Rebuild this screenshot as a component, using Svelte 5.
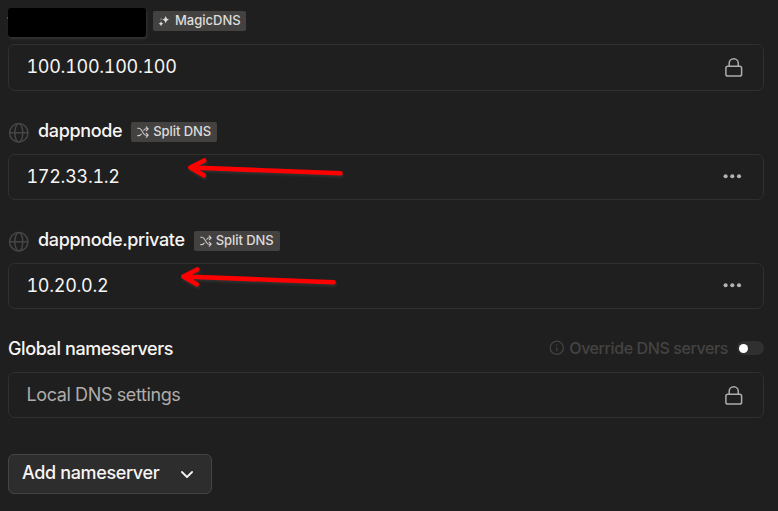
<script>
  const servers = [
    { domain: 'dappnode', address: '172.33.1.2' },
    { domain: 'dappnode.private', address: '10.20.0.2' }
  ];
</script>

{#snippet lock()}
  <svg class="lock" width="20" height="22" viewBox="0 0 20 22" fill="none" stroke="#afacab" stroke-width="1.5">
    <rect x="1.9" y="9.2" width="15.7" height="9.9" rx="1.9" />
    <path d="M5.2 9V6.3a4.55 4.55 0 0 1 9.1 0V9" />
  </svg>
{/snippet}

<main>
  <header class="first">
    <span class="redacted"></span>
    <span class="badge magic">
      <svg width="12" height="12" viewBox="0 0 12 12" fill="#dedcda">
        <path d="M7.7 .7Q8.3 4 11.4 4.6Q8.3 5.2 7.7 8.5Q7.1 5.2 4 4.6Q7.1 4 7.7 .7Z" />
        <path d="M3 6.2Q3.4 8.3 5.4 8.7Q3.4 9.1 3 11.2Q2.6 9.1 .6 8.7Q2.6 8.3 3 6.2Z" />
        <circle cx="3" cy="4" r=".6" />
      </svg>
      <span>MagicDNS</span>
    </span>
  </header>
  <div class="field tall"><span class="ip">100.100.100.100</span>{@render lock()}</div>

  {#each servers as server, i}
    <header class="domain">
      <svg class="globe" width="22" height="22" viewBox="0 0 22 22" fill="none" stroke="#484645" stroke-width="1.5">
        <circle cx="10.8" cy="10.8" r="9.2" />
        <ellipse cx="10.8" cy="10.8" rx="4" ry="9.2" />
        <path d="M1.6 10.8h18.4" />
      </svg>
      <h2>{server.domain}</h2>
      <span class="badge split">
        <svg width="12" height="12" viewBox="0 0 12 12" fill="none" stroke="#cfcdcb" stroke-width="1.05" stroke-linecap="round" stroke-linejoin="round">
          <path d="M.7 2.2h1.2c1.2 0 1.7.7 2.3 1.6l2.5 3.9c.6.9 1.2 1.5 2.3 1.5h2.1M9.2 7.1l2 2.1-2 2.1M.7 9.6h1.2c1.2 0 1.7-.6 2.3-1.5M6.8 4.3c.6-.9 1.1-1.5 2.2-1.5h2.1M9.2.8l2 2-2 2" />
        </svg>
        <span>Split DNS</span>
      </span>
    </header>
    <div class="field">
      <span class="ip">{server.address}</span>
      <svg class="dots" width="20" height="6" viewBox="0 0 20 6" fill="#b5b3b1">
        <circle cx="2.6" cy="3.2" r="2.05" /><circle cx="9.3" cy="3.2" r="2.05" /><circle cx="16" cy="3.2" r="2.05" />
      </svg>
      <svg class="arrow" class:shifted={i === 1} width="166" height="34" viewBox="0 0 166 34" fill="none" stroke="#ff0000" stroke-width="4.6" stroke-linecap="round" stroke-linejoin="round">
        <path d="M7 12.5L156.5 18.3M20.2 5.5L6.3 12.5L19.7 20.3" />
      </svg>
    </div>
  {/each}

  <header class="global">
    <h2>Global nameservers</h2>
    <div class="override">
      <svg width="16" height="16" viewBox="0 0 16 16" fill="none" stroke="#454342" stroke-width="1.25">
        <circle cx="7.8" cy="7.8" r="6.6" /><path d="M7.8 7.2v4M7.8 4.2v1.4" />
      </svg>
      <span>Override DNS servers</span>
      <i class="toggle"></i>
    </div>
  </header>
  <div class="field last"><span class="local">Local DNS settings</span>{@render lock()}</div>

  <button>
    <span>Add nameserver</span>
    <svg width="14" height="10" viewBox="0 0 14 10" fill="none" stroke="#f4f3f2" stroke-width="1.8" stroke-linecap="round" stroke-linejoin="round"><path d="M1.9 2L7 7l5.1-5" /></svg>
  </button>
</main>

<style>
  :global(body) { background: #1f1f1f; }
  main {
    box-sizing: border-box;
    height: 511px;
    padding: 8px 14px 0 8px;
    overflow: hidden;
    background: #1f1f1f;
    color: #f7f5f4;
    font: 18px/24px Inter, sans-serif;
  }
  header { display: flex; align-items: flex-start; }
  .first { height: 36px; }
  .redacted { position: relative; width: 138px; height: 29px; border-radius: 3px; background: #000; box-shadow: 1px 2px 3px #343434; }
  .redacted::before { content: ''; position: absolute; left: -1px; top: 9px; width: 1px; height: 2px; background: #405078; }
  .badge {
    display: flex;
    align-items: center;
    box-sizing: border-box;
    height: 20px;
    border-radius: 2px;
    background: #444241;
    color: #dedcda;
    font-size: 13px;
    font-weight: 500;
    line-height: 18px;
    white-space: nowrap;
  }
  .badge svg { flex: none; }
  .badge span { padding-bottom: 2px; }
  .magic { width: 93px; margin: 3px 0 0 7px; padding-left: 5px; gap: 5px; }
  .split { width: 86px; margin: 12px 0 0 9px; padding-left: 6px; gap: 4px; letter-spacing: -0.07px; }
  .field {
    position: relative;
    display: flex;
    align-items: center;
    justify-content: space-between;
    box-sizing: border-box;
    height: 46px;
    padding: 0 19px 0 17.5px;
    border: 1px solid #313030;
    border-radius: 7px;
  }
  .tall { height: 47px; }
  .ip { font-variant-numeric: tabular-nums; letter-spacing: -0.3px; }
  .tall .ip { padding-bottom: 1px; }
  .last .lock { margin-top: 2px; }
  .last { align-items: center; }
  .domain { box-sizing: border-box; height: 63px; padding-top: 19px; }
  .domain .globe { margin: 12px 8px 0 0; flex: none; }
  h2 { margin: 9px 0 0; font-size: 18px; font-weight: 500; line-height: 24px; letter-spacing: -0.35px; }
  .dots { margin: 0 1px 2px 0; }
  .arrow { position: absolute; left: 175px; top: 0; filter: drop-shadow(1px 2px 1px #303030); }
  .shifted { left: 168px; }
  .global { height: 63px; justify-content: space-between; }
  .global h2 { margin-top: 28px; letter-spacing: -0.39px; }
  .override { display: flex; align-items: center; margin-top: 27px; color: #454342; font-size: 16px; font-weight: 500; gap: 4px; }
  .override span { letter-spacing: -0.4px; }
  .toggle { width: 27px; height: 14px; margin-left: 5px; border-radius: 7px; background: #303030; }
  .toggle::before { content: ''; display: block; width: 9px; height: 9px; margin: 3px 0 0 2px; border-radius: 50%; background: #fff; }
  .local { color: #afacaa; letter-spacing: -0.39px; }
  button {
    display: flex;
    align-items: center;
    justify-content: space-between;
    box-sizing: border-box;
    width: 204px;
    height: 40px;
    margin-top: 36px;
    padding: 0 17px 2px 13px;
    border: 1px solid #454343;
    border-radius: 6px;
    background: #2e2d2d;
    color: #f7f5f4;
    font: 500 18px/24px Inter, sans-serif;
    letter-spacing: -0.36px;
  }
  button svg { margin-top: 4px; }
</style>
